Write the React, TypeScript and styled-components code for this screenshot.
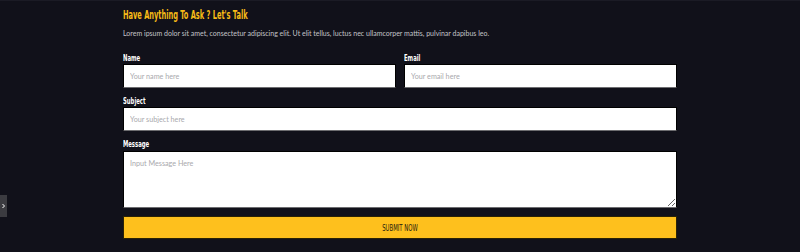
import styled, { createGlobalStyle } from 'styled-components';

const GlobalStyle = createGlobalStyle`
  html, body {
    margin: 0;
    padding: 0;
    background: #11111a;
  }
  * { box-sizing: border-box; }
`;

const Page = styled.div`
  position: relative;
  width: 800px;
  height: 252px;
  background: #11111a;
  border-top: 1px solid #1b1b25;
  overflow: hidden;
`;

const Section = styled.section`
  width: 554px;
  margin: 0 auto;
  padding-top: 4px;
`;

// narrow display face, squeezed to match the condensed headline font
const Title = styled.h2`
  margin: 0;
  display: inline-block;
  font-family: 'DejaVu Sans Condensed', 'DejaVu Sans', sans-serif;
  font-weight: bold;
  font-size: 12.5px;
  line-height: 16px;
  color: #f7bb17;
  white-space: nowrap;
  transform: scaleX(0.59);
  transform-origin: left center;
`;

const Intro = styled.p`
  margin: 4px 0 0;
  font-family: Lato, 'Open Sans', sans-serif;
  font-size: 7px;
  line-height: 12px;
  color: #c4c4c8;
`;

const Form = styled.form`
  display: grid;
  grid-template-columns: 1fr 1fr;
  column-gap: 8px;
  row-gap: 8px;
  margin-top: 14px;
`;

const Field = styled.div<{ $full?: boolean }>`
  display: flex;
  flex-direction: column;
  gap: 1px;
  grid-column: ${(p) => (p.$full ? '1 / -1' : 'auto')};
`;

const Label = styled.label`
  display: block;
  font-family: 'DejaVu Sans Condensed', 'DejaVu Sans', sans-serif;
  font-weight: bold;
  font-size: 9.5px;
  line-height: 10px;
  color: #ffffff;
  white-space: nowrap;
  transform: scaleX(0.62);
  transform-origin: left center;
`;

const Input = styled.input`
  height: 24px;
  width: 100%;
  padding: 0 6px;
  border: 1px solid #000;
  border-bottom-color: #6d6d70;
  background: #ffffff;
  font-family: Lato, 'Open Sans', sans-serif;
  font-size: 7.2px;
  color: #333;
  outline: none;

  &::placeholder {
    color: #a9a9ad;
  }
`;

const TextArea = styled.textarea`
  height: 57px;
  width: 100%;
  margin-top: 1px;
  padding: 7px 6px;
  border: 1px solid #000;
  border-bottom-color: #6d6d70;
  background: #ffffff;
  font-family: Lato, 'Open Sans', sans-serif;
  font-size: 7.2px;
  color: #333;
  outline: none;
  resize: vertical;
  display: block;

  &::placeholder {
    color: #a9a9ad;
  }
`;

const Submit = styled.button`
  grid-column: 1 / -1;
  height: 23px;
  border: 1px solid #2a2205;
  background: #fec01d;
  cursor: pointer;
  display: flex;
  align-items: center;
  justify-content: center;
`;

const SubmitText = styled.span`
  display: inline-block;
  font-family: 'DejaVu Sans Condensed', 'DejaVu Sans', sans-serif;
  font-size: 9px;
  color: #1d1a10;
  transform: scaleX(0.66);
`;

const SideTab = styled.div`
  position: absolute;
  left: 0;
  top: 194px;
  width: 7px;
  height: 22px;
  background: #3b3b40;
  display: flex;
  align-items: center;
  justify-content: center;
`;

const App = () => {
  return (
    <>
      <GlobalStyle />
      <Page>
        <Section>
          <Title>Have Anything To Ask ? Let's Talk</Title>
          <Intro>
            Lorem ipsum dolor sit amet, consectetur adipiscing elit. Ut elit tellus, luctus nec
            ullamcorper mattis, pulvinar dapibus leo.
          </Intro>
          <Form onSubmit={(e) => e.preventDefault()}>
            <Field>
              <Label>Name</Label>
              <Input type="text" placeholder="Your name here" />
            </Field>
            <Field>
              <Label>Email</Label>
              <Input type="email" placeholder="Your email here" />
            </Field>
            <Field $full>
              <Label>Subject</Label>
              <Input type="text" placeholder="Your subject here" />
            </Field>
            <Field $full>
              <Label>Message</Label>
              <TextArea placeholder="Input Message Here" />
            </Field>
            <Submit type="submit">
              <SubmitText>SUBMIT NOW</SubmitText>
            </Submit>
          </Form>
        </Section>
        <SideTab>
          <svg width="5" height="6" viewBox="0 0 5 6">
            <path d="M1.5 1 L3.5 3 L1.5 5" stroke="#fff" strokeWidth="1" fill="none" />
          </svg>
        </SideTab>
      </Page>
    </>
  );
};

export default App;
